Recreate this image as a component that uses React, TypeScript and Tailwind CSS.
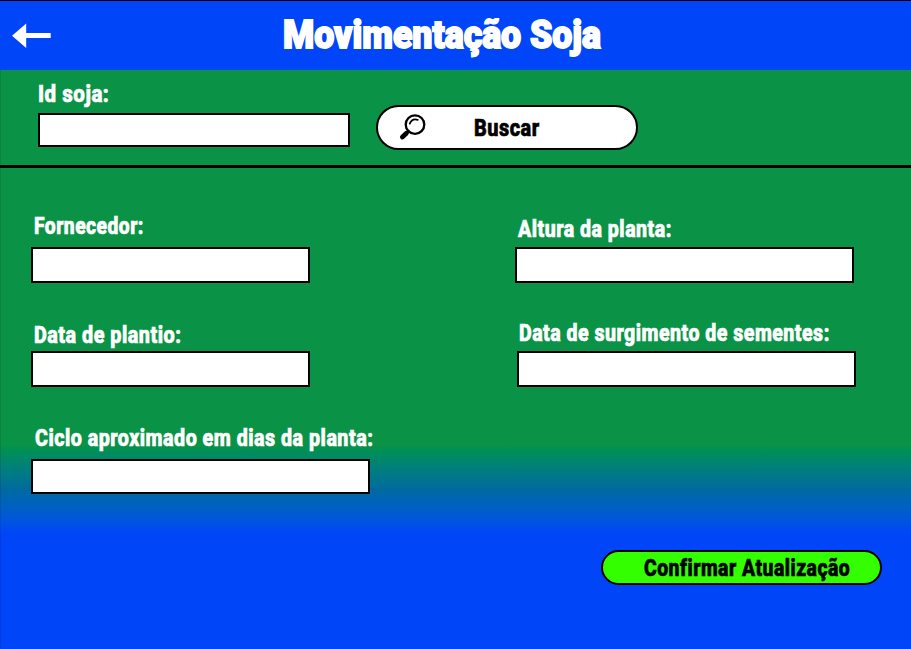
import { useLayoutEffect, useRef, useState } from "react";

type FitTextProps = { text: string; width: number; className: string };

// Condenses a line of text horizontally so that it fills the given width.
function FitText({ text, width, className }: FitTextProps) {
  const ref = useRef<HTMLSpanElement>(null);
  const [scale, setScale] = useState(1);

  useLayoutEffect(() => {
    if (ref.current) setScale(width / ref.current.offsetWidth);
  }, [text, width]);

  return (
    <span className="block" style={{ width }}>
      <span
        ref={ref}
        className={`inline-block origin-left whitespace-nowrap align-top ${className}`}
        style={{ transform: `scaleX(${scale})` }}
      >
        {text}
      </span>
    </span>
  );
}

type FieldProps = {
  label: string;
  labelWidth: number;
  labelClass: string;
  inputClass: string;
};

function Field({ label, labelWidth, labelClass, inputClass }: FieldProps) {
  return (
    <label className="block">
      <span className={`block ${labelClass}`}>
        <FitText
          text={label}
          width={labelWidth}
          className="text-2xl/6 font-extrabold tracking-wide text-white [-webkit-text-stroke:0.7px_white]"
        />
      </span>
      <input
        aria-label={label}
        className={`block border-2 border-black bg-white px-2 outline-none ${inputClass}`}
      />
    </label>
  );
}

function ArrowIcon() {
  return (
    <svg width="40" height="26" viewBox="0 0 40 26" fill="white">
      <path d="M0 12.7 14.2 0.5V10H38.7V15H14.2V25Z" />
    </svg>
  );
}

function SearchIcon() {
  return (
    <svg width="28" height="28" viewBox="0 0 28 28" fill="none" stroke="black" strokeLinecap="round">
      <circle cx="16" cy="10.6" r="9.3" strokeWidth="2.3" />
      <path d="M10.8 9.6C12.2 6 15.4 4.8 18.8 5.8" strokeWidth="1.8" />
      <path d="M9.4 17.2 7.8 18.8" strokeWidth="2.6" />
      <path d="M7.4 19.2 3.4 23" strokeWidth="4.8" />
    </svg>
  );
}

export default function App() {
  return (
    <div className="flex h-[649px] w-[911px] flex-col overflow-hidden bg-linear-to-b from-[#0a9346] from-[445px] via-[#0069a0] via-[490px] to-[#0045f8] to-[533px] font-['Roboto','Liberation_Sans',sans-serif] shadow-[inset_1px_0_0_rgba(0,0,0,0.1)]">
      <header className="flex h-[70px] shrink-0 border-t border-black bg-[#0045f8] pl-[11.5px]">
        <button aria-label="Voltar" className="mt-[22px] h-[26px] w-10">
          <ArrowIcon />
        </button>
        <h1 className="mt-3.5 ml-[231px]">
          <FitText
            text="Movimentação Soja"
            width={318}
            className="text-[39px]/[40px] font-black text-white [-webkit-text-stroke:1.8px_white]"
          />
        </h1>
      </header>

      <section className="flex h-[98px] shrink-0 border-b-[3px] border-black pl-[38px]">
        <div className="mt-3 w-[338px]">
          <Field label="Id soja:" labelWidth={71} labelClass="mb-[7px]" inputClass="h-[34px] w-[312px]" />
        </div>
        <button className="mt-[35px] flex h-[45px] w-[262px] rounded-full border-2 border-black bg-white pl-[21px]">
          <span className="mt-[7px] w-[75px]">
            <SearchIcon />
          </span>
          <span className="mt-[9px]">
            <FitText
              text="Buscar"
              width={65.5}
              className="text-2xl/6 font-extrabold tracking-wide text-black [-webkit-text-stroke:0.7px_black]"
            />
          </span>
        </button>
      </section>

      <main className="flex h-[382px] shrink-0 pl-[31px]">
        <div className="w-[484px] pt-[46px]">
          <Field label="Fornecedor:" labelWidth={110} labelClass="ml-[2.5px] mb-[9px]" inputClass="h-9 w-[279px]" />
          <div className="mt-10">
            <Field label="Data de plantio:" labelWidth={147.5} labelClass="ml-[2.5px] mb-1" inputClass="h-9 w-[279px]" />
          </div>
          <div className="mt-[39px]">
            <Field
              label="Ciclo aproximado em dias da planta:"
              labelWidth={338}
              labelClass="ml-[3.5px] mb-[9px]"
              inputClass="h-[35px] w-[339px]"
            />
          </div>
        </div>
        <div className="pt-[49px]">
          <Field label="Altura da planta:" labelWidth={153.5} labelClass="ml-[2.5px] mb-1.5" inputClass="h-9 w-[339px]" />
          <div className="mt-[38px] ml-[1.5px]">
            <Field
              label="Data de surgimento de sementes:"
              labelWidth={310.5}
              labelClass="ml-[2px] mb-1.5"
              inputClass="h-9 w-[339px]"
            />
          </div>
        </div>
      </main>

      <footer className="flex justify-end pr-[29px]">
        <button className="flex h-[35px] w-[281px] rounded-full border-2 border-black bg-[#33ff00] pt-1 pl-[41px]">
          <FitText
            text="Confirmar Atualização"
            width={206}
            className="text-2xl/6 font-extrabold tracking-wide text-black [-webkit-text-stroke:0.7px_black]"
          />
        </button>
      </footer>
    </div>
  );
}
